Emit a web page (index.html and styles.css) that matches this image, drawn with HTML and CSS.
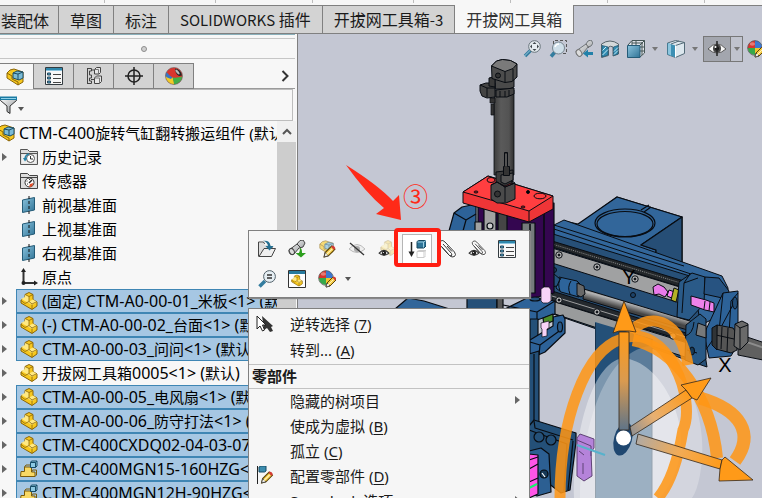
FILE: index.html
```html
<!DOCTYPE html>
<html lang="zh-CN">
<head>
<meta charset="utf-8">
<title>CTM-C400旋转气缸翻转搬运组件</title>
<link rel="stylesheet" href="styles.css">
</head>
<body>
<svg class="defs" aria-hidden="true">
  <defs>
    <linearGradient id="gBlue" x1="0" y1="0" x2="1" y2="1"><stop offset="0" stop-color="#8cc4de"/><stop offset="1" stop-color="#2f7396"/></linearGradient>
    <linearGradient id="gGrey" x1="0" y1="0" x2="1" y2="1"><stop offset="0" stop-color="#ffffff"/><stop offset="1" stop-color="#8b8f92"/></linearGradient>
    <symbol id="part" viewBox="0 0 18 18">
      <path d="M1 8l4-2V2.500l4-2 4 2v5l4 2.500v4l-5 3.500L1 11z" fill="#f7c81e" stroke="#8a6508"/>
      <path d="M5 2.500l4 2v5l4-2 4 2.500-5 3-7-4-4-2 4-2z" fill="#ffe982"/>
      <path d="M5 2.500l4 2 4-2M9 4.500v5l3 2.500 5-2.500M12 12.500V17M9 9.500L5 11.500 1 8.500" fill="none" stroke="#8a6508" stroke-width=".8"/>
    </symbol>
    <symbol id="assembly" viewBox="0 0 18 18">
      <path d="M1 5l3-3 4-1 3 1 6 2v10l-5 3L1 10z" fill="#f7c81e" stroke="#8a6508"/>
      <path d="M1 5l5 3v3l6 3v3" fill="none" stroke="#8a6508"/>
      <path d="M7 5l4-2 6 1v6l-4 2-6-2z" fill="#7bbbd6" stroke="#1c4f68"/>
      <path d="M7 5l5 1v6M12 6l5-2" fill="none" stroke="#1c4f68"/>
    </symbol>
    <symbol id="subpart" viewBox="0 0 18 18">
      <path d="M1 11.500h3.500V7h7v5H15v4.500H.5z" fill="#f9d964" stroke="#7b5b08"/>
      <path d="M4.500 7l1.500-2h6M11.500 12l1-2h4v5l-1.500 1.500" fill="none" stroke="#7b5b08"/>
      <path d="M10.500 2.500l1-1.500H17v5l-1.500 1.500h-5z" fill="#8cc9e2" stroke="#174d67"/>
      <path d="M10.500 2.500h5v5M15.500 2.500L17 1" fill="none" stroke="#174d67"/>
    </symbol>
    <symbol id="list" viewBox="0 0 18 18">
      <path d="M.5.5h17v17H.5z" fill="#f8f8f8" stroke="#333b40"/>
      <path d="M1 1h16v3H1z" fill="#2f87ab"/><path d="M1 3h16v1H1z" fill="#8cc4de"/>
      <path d="M2.500 6h3v2h-3zM2.500 10h3v2h-3zM2.500 14h3v2h-3z" fill="#4c9fc4" stroke="#27475a"/>
      <path d="M8 7.500h8M8 11.500h8M8 15.500h8" stroke="#444"/>
    </symbol>
    <symbol id="config" viewBox="0 0 18 18">
      <path d="M2.500 1v15.500M2 1.500h4.500v2.500H4.500v4h2v3h-2v3h2v2.500H2" fill="none" stroke="#444"/>
      <path d="M6 3h4M6 12.500h4" stroke="#444"/>
      <path d="M9.500 2.500l2-2h4v5l-1.500 1.500H9.500zM9.500 11l2-2h5v5.500L14.500 16.500h-5z" fill="#e6e6e6" stroke="#444"/>
      <path d="M9.500 2.500h4V7M9.500 11h5v5" fill="none" stroke="#777"/>
    </symbol>
    <symbol id="target" viewBox="0 0 18 18">
      <circle cx="9" cy="9" r="6" fill="none" stroke="#222" stroke-width="1.500"/>
      <path d="M9 0v18M0 9h18" stroke="#222" stroke-width="1.500"/>
    </symbol>
    <symbol id="ball" viewBox="0 0 18 18">
      <path d="M9 9L1 10A8 8 0 0 1 9 .5z" fill="#d8342c"/><path d="M9 9V.5A8 8 0 0 1 17 9z" fill="#3b78cf"/>
      <path d="M9 9h8A8 8 0 0 1 9 17z" fill="#eec52d"/><path d="M9 9v8A8 8 0 0 1 1 9z" fill="#36a949"/>
      <circle cx="9" cy="9" r="8.300" fill="none" stroke="#555" stroke-width=".8"/>
      <ellipse cx="6" cy="4.500" rx="3" ry="2" fill="#fff" opacity=".35"/>
    </symbol>
    <symbol id="ballStudio" viewBox="0 0 18 18">
      <circle cx="9" cy="9" r="8.500" fill="#d9352e"/>
      <path d="M.5 9q4 1 7 1.500L9 17.500A8.500 8.500 0 0 1 .5 9z" fill="#f1cb27"/>
      <path d="M7.500 10.500q5 .5 9.800-1A8.500 8.500 0 0 1 9 17.500z" fill="#42ae47"/>
      <path d="M1.500 5q3 4 6 5.500L6 12q-4-1-5.500-3 0-2 1-4z" fill="#3676c5"/>
      <path d="M7.500 10.500L4.500 15l4.500 2.500z" fill="#f1cb27"/>
      <path d="M10 1.500q6 1 7 7l-3 .5q-4-2-4-7.500z" fill="#252525"/>
      <ellipse cx="12.500" cy="5" rx="1.200" ry="3" fill="#bbb" transform="rotate(-40 12.500 5)"/>
      <circle cx="9" cy="9" r="8.500" fill="none" stroke="#666" stroke-width=".6"/>
    </symbol>
    <symbol id="pencil" viewBox="0 0 12 12">
      <path d="M1 11l1-4 6-6 3 3-6 6z" fill="#f4cb45" stroke="#5a4208"/><path d="M1 11l1-4 3 3z" fill="#eee" stroke="#333" stroke-width=".7"/>
      <path d="M7.500 1.500l1-1q2 0 3 2.500l-1.500 1.500z" fill="#d33b35"/><path d="M3 9l5.500-5.500" stroke="#fff3ba"/>
    </symbol>
    <symbol id="folderHistory" viewBox="0 0 18 18">
      <path d="M.5 16.500V1.500h7l2 2h8v13z" fill="#ddd" stroke="#555"/><path d="M1 5.500h16" stroke="#555"/>
      <path d="M2 6.500h14v9H2z" fill="#eee"/>
      <circle cx="10.500" cy="10.500" r="4" fill="#fff" stroke="#555"/><path d="M10.500 8v3h2.500" fill="none" stroke="#333"/>
      <path d="M3 10h4.500L5 13.500z" fill="#2783a8"/><path d="M5 10q1-3.500 4-4" fill="none" stroke="#2783a8" stroke-width="1.500"/>
    </symbol>
    <symbol id="folderSensor" viewBox="0 0 18 18">
      <path d="M.5 16.500V1.500h7l2 2h8v13z" fill="#ddd" stroke="#444"/><path d="M1 5.500h16" stroke="#444"/>
      <circle cx="9.500" cy="10.500" r="4.500" fill="#fff" stroke="#333"/><path d="M9 11l3-3" stroke="#222" stroke-width="1.500"/>
      <path d="M10 12l3.500-1-1.500 3.500-3 .5z" fill="#e34c27"/><path d="M6.500 9h1M9.500 7v1M7 12h1" stroke="#333"/>
    </symbol>
    <symbol id="plane" viewBox="0 0 18 18">
      <path d="M2.500 4l12-2.500v12.500l-12 2.500z" fill="url(#gBlue)" stroke="#245b77"/>
      <path d="M9 0v3M9 5v3M9 10v3M9 15v3" stroke="#111"/>
    </symbol>
    <symbol id="origin" viewBox="0 0 18 18">
      <path d="M3.500 3v12H15" fill="none" stroke="#333" stroke-width="2"/><path d="M3.500 0l2.500 4H1zM18 15l-4-2.500v5z" fill="#222"/><circle cx="3.500" cy="15" r="2" fill="#222"/>
    </symbol>
    <symbol id="funnel" viewBox="0 0 18 18">
      <path d="M.5 2h16v2.500L10 10v7.500l-3-2V10L.5 4.500z" fill="url(#gGrey)" stroke="#333"/>
      <path d="M0 .5h17V4H0z" fill="#197aa3"/><path d="M1 2h15v1H1z" fill="#8fd0e8"/>
    </symbol>
    <symbol id="zoomFit" viewBox="0 0 18 18">
      <path d="M8 10l-6 6" stroke="#347d9f" stroke-width="3.500"/><path d="M7.500 10L1 16.500" stroke="#9ccbe0"/>
      <circle cx="11.500" cy="6.500" r="5.800" fill="#e6edf1" stroke="#68747b"/>
      <path d="M11.500 2l2 2h-4zM11.500 11l2-2h-4zM7 6.500l2-2v4zM16 6.500l-2-2v4z" fill="#3f474c"/>
    </symbol>
    <symbol id="zoomArea" viewBox="0 0 18 18">
      <path d="M4.500 4V.5h13v13H14" fill="none" stroke="#555" stroke-dasharray="3 2"/>
      <path d="M6 12l-4 4.500" stroke="#347d9f" stroke-width="3.500"/><circle cx="9.500" cy="8" r="6" fill="#cfdfe9" stroke="#778690"/>
      <path d="M6 7q1-3 4-3" fill="none" stroke="#fff" stroke-width="1.500"/>
    </symbol>
    <symbol id="prevView" viewBox="0 0 18 18">
      <path d="M1 11l10-7 2-3 3-1 2 3-2 3-3 1-7 9q-5 1-5-5z" fill="url(#gGrey)" stroke="#70767a"/>
      <ellipse cx="4" cy="13" rx="2.500" ry="3.500" fill="#ddd" stroke="#777" transform="rotate(-30 4 13)"/><path d="M11 4l3 4" stroke="#666"/>
      <path d="M8 13.500l5-4v2.500h5v3h-5v2.500z" fill="#2381a9"/>
    </symbol>
    <symbol id="section" viewBox="0 0 18 18">
      <path d="M.5 4Q9-2 17.500 4V14l-5.500 2V7Q9.500 5.500 7.500 7v8.500l-7 2z" fill="#d3d8da" stroke="#58646b"/>
      <path d="M1 5.500l6 1.500v8l-6 2zM12.500 7L17 5.500V14l-4.500 1.500z" fill="#318bb0" stroke="#245b77" stroke-width=".8"/>
      <path d="M1.500 10.500L5 7M1.500 15L7 9.500M13 11.500l4-4M13 14.500l4-4" stroke="#caecf8"/>
    </symbol>
    <symbol id="orient" viewBox="0 0 18 18">
      <path d="M1 5l4-4.500h12.500V13L13 17" fill="#e0e4ea" stroke="#455"/>
      <path d="M5 1v4M9 1v4M13 5l4.500-4.500M5 3h11M15 2v13M13 7h4M13 11h4" fill="none" stroke="#455"/>
      <path d="M.5 5.500h12.500v12H.5z" fill="url(#gBlue)" stroke="#245b77"/>
    </symbol>
    <symbol id="display" viewBox="0 0 18 18">
      <path d="M.5 3l8-2.500 9 2v11l-9 4-8-3z" fill="#dce7ee" stroke="#536a77"/>
      <path d="M.5 3l8 2.500v12l-8-3z" fill="#3d90b4"/><path d="M4 4l8-3M8.500 5.500l9-3" stroke="#536a77"/><path d="M1 3.500L4 4.500v11L1 14z" fill="#8cc6df"/><path d="M8.500 5.500v12" stroke="#fff"/>
    </symbol>
    <symbol id="eye" viewBox="0 0 18 18">
      <path d="M0 9q9-10 18 0-9 8-18 0z" fill="#f6f6f6" stroke="#555"/><circle cx="9" cy="8.500" r="4" fill="#444"/><circle cx="9" cy="8.500" r="2" fill="#111"/><path d="M9 1v15" stroke="#222" stroke-width="1.500"/><circle cx="7.500" cy="7" r="1" fill="#fff"/>
    </symbol>
    <symbol id="openFile" viewBox="0 0 18 18">
      <path d="M.5 16.500V2h5l1 2M14 6.500v3" fill="none" stroke="#444"/><path d="M1 16.500V3h4l2 2h6v5L9 16z" fill="#ddd"/><path d="M1 16.500L6 8.500h11.500l-4 8z" fill="#efefef" stroke="#444"/>
      <path d="M5 .8q7-1 7.500 5.200h3L11.500 10.500 7.500 6H10Q9.500 2 5 .8z" fill="#256f91"/>
    </symbol>
    <symbol id="spyglass" viewBox="0 0 18 18">
      <path d="M1 10l8-6 3-3.500 3-.5 2 3-2 4-4 1-5 6Q1 16 1 10z" fill="url(#gGrey)" stroke="#444"/><ellipse cx="3.800" cy="11.500" rx="2.300" ry="3.200" fill="#ddd" stroke="#444" transform="rotate(-30 3.800 11.500)"/><path d="M9 4l4 4" stroke="#444"/>
      <path d="M12 8q2 0 2 5h4l-5 4.500L7.500 13H11q1-2 1-5z" fill="#2c9e1d"/>
    </symbol>
    <symbol id="hide" viewBox="0 0 18 18">
      <path d="M1 9q8-9 16 0-8 7-16 0z" fill="#eee" stroke="#bbb"/><circle cx="9" cy="9" r="3" fill="#aaa"/><path d="M2 3l14 12" stroke="#333" stroke-width="1.300"/>
    </symbol>
    <symbol id="eyeDark" viewBox="0 0 18 18">
      <path d="M1 10q8-9 16 0-8 7-16 0z" fill="#fff" stroke="#333" stroke-width="1.800"/><circle cx="9" cy="10" r="3.800" fill="#222"/><circle cx="8" cy="9" r="1" fill="#fff"/>
    </symbol>
    <symbol id="suppress" viewBox="0 0 18 18">
      <path d="M3.500 2v12" stroke="#222" stroke-width="1.500"/><path d="M.5 11.500h6L3.500 17z" fill="#222"/>
      <path d="M9 1.500l2-1h7v5.500L16 8H9z" fill="#2e7598" stroke="#17475f"/><path d="M9.500 2h6v5.500M15.500 2L18 .5" fill="none" stroke="#9ed0e3"/>
      <path d="M9 11.500l2-1h7v5l-2 2H9zM9 11.500h7v6M16 11.500l2-1" fill="#fff" stroke="#ccc"/>
    </symbol>
    <symbol id="clip" viewBox="0 0 18 18">
      <path d="M5 4l8.500 9.500q1 2-.5 2.500-1.500 0-3-2L2 5Q.5 2.500 2.500 1 5-.5 7 2l9.500 10q2 3 0 4.500-2.500 1.500-5-1M8 6l5 6" fill="none" stroke="#fff" stroke-width="2.500"/>
      <path d="M5 4l8.500 9.500q1 2-.5 2.500-1.500 0-3-2L2 5Q.5 2.500 2.500 1 5-.5 7 2l9.500 10q2 3 0 4.500-2.500 1.500-5-1L4 7M9 6l5 5.500" fill="none" stroke="#333"/>
    </symbol>
    <symbol id="zoomSel" viewBox="0 0 18 18">
      <path d="M7 11l-5.500 5.500" stroke="#347d9f" stroke-width="3.500"/><circle cx="11.500" cy="6.500" r="5.900" fill="#e5eef3" stroke="#52616a"/><path d="M9 5h5M9 8h5" stroke="#333" stroke-width="1.500"/>
    </symbol>
    <symbol id="partWindow" viewBox="0 0 18 18">
      <path d="M.5.5h17v17H.5z" fill="#fff" stroke="#333"/><path d="M1 1h16v3H1z" fill="#287b9e"/><use href="#part" x="3" y="4.500" width="12" height="12"/>
    </symbol>
    <symbol id="cursor" viewBox="0 0 18 18">
      <path d="M6 1l11 10-2 1 2 4-3 1-3-4-3 2z" fill="#333"/><path d="M1 1v13l3-3 2.500 5 2-1-2-5H10z" fill="#fff" stroke="#222"/>
    </symbol>
    <symbol id="configPart" viewBox="0 0 18 18">
      <path d="M1.500 0v18" stroke="#222"/><path d="M3 1l2-1h5v5L8.500 6H3z" fill="#3c8cae" stroke="#174d67"/><use href="#pencil" x="4" y="5" width="14" height="13"/>
    </symbol>
    <symbol id="editAsm" viewBox="0 0 18 18">
      <use href="#assembly" x="0" y="0" width="17" height="15" opacity=".6"/><use href="#pencil" x="5" y="5" width="13" height="13"/>
    </symbol>
    <symbol id="showPart" viewBox="0 0 18 18">
      <use href="#part" x="2" y="0" width="16" height="16" opacity=".3"/><use href="#eyeDark" x="0" y="7" width="12" height="11"/>
    </symbol>
    <symbol id="clipEye" viewBox="0 0 18 18"><use href="#clip" x="3" y="0" width="15" height="16"/><use href="#eyeDark" x="0" y="7" width="12" height="11"/></symbol>
    <symbol id="ballPencil" viewBox="0 0 18 18"><use href="#ball" x="0" y="0" width="16" height="16"/><use href="#pencil" x="7" y="6" width="12" height="12"/></symbol>
  </defs>
</svg>

<div class="app">
  <div class="ruler"><i></i><i></i><i></i><i></i><i></i><i></i><i></i></div>
  <nav class="tabs">
    <button class="tab first">装配体</button><button class="tab">草图</button><button class="tab">标注</button><button class="tab"><span>SOLIDWORKS</span> 插件</button><button class="tab">开拔网工具箱<span>-3</span></button><button class="tab active">开拔网工具箱</button>
  </nav>

  <aside class="panel">
    <div class="grip"><span></span></div>
    <div class="ptabs">
      <button class="ptab active" aria-label="设计树"><svg><use href="#assembly"/></svg></button>
      <button class="ptab" aria-label="属性"><svg><use href="#list"/></svg></button>
      <button class="ptab" aria-label="配置"><svg><use href="#config"/></svg></button>
      <button class="ptab" aria-label="尺寸"><svg><use href="#target"/></svg></button>
      <button class="ptab" aria-label="外观"><svg><use href="#ballStudio"/></svg></button>
      <button class="more" aria-label="更多"><svg viewBox="0 0 8 12"><path d="M1.500 1l5 5-5 5" fill="none" stroke="#333" stroke-width="2"/></svg></button>
    </div>
    <div class="filter">
      <button aria-label="过滤器"><svg><use href="#funnel"/></svg><svg class="caret" viewBox="0 0 6 4"><path d="M0 0h6L3 4z"/></svg></button>
      <input type="text" aria-label="过滤">
    </div>
    <div class="treebox">
      <ul class="tree">
        <li class="root"><svg><use href="#assembly"/></svg><p><b>CTM-C400</b>旋转气缸翻转搬运组件 (默认)</p></li>
        <li class="node open"><div><svg><use href="#folderHistory"/></svg><p>历史记录</p></div></li>
        <li class="node"><div><svg><use href="#folderSensor"/></svg><p>传感器</p></div></li>
        <li class="node"><div><svg><use href="#plane"/></svg><p>前视基准面</p></div></li>
        <li class="node"><div><svg><use href="#plane"/></svg><p>上视基准面</p></div></li>
        <li class="node"><div><svg><use href="#plane"/></svg><p>右视基准面</p></div></li>
        <li class="node"><div><svg><use href="#origin"/></svg><p>原点</p></div></li>
        <li class="node open sel"><div><svg><use href="#part"/></svg><p><b>(</b>固定<b>) CTM-A0-00-01_</b>米板<b>&lt;1&gt; (</b>默认)</p></div></li>
        <li class="node open sel"><div><svg><use href="#part"/></svg><p><b>(-) CTM-A0-00-02_</b>台面<b>&lt;1&gt; (</b>默认)</p></div></li>
        <li class="node open sel"><div><svg><use href="#part"/></svg><p><b>CTM-A0-00-03_</b>问问<b>&lt;1&gt; (</b>默认)</p></div></li>
        <li class="node open"><div><svg><use href="#part"/></svg><p>开拔网工具箱<b>0005&lt;1&gt; (</b>默认<b>)</b></p></div></li>
        <li class="node open sel"><div><svg><use href="#part"/></svg><p><b>CTM-A0-00-05_</b>电风扇<b>&lt;1&gt; (</b>默认)</p></div></li>
        <li class="node open sel"><div><svg><use href="#part"/></svg><p><b>CTM-A0-00-06_</b>防守打法<b>&lt;1&gt; (</b>默认)</p></div></li>
        <li class="node open sel"><div><svg><use href="#part"/></svg><p><b>CTM-C400CXDQ02-04-03-07</b></p></div></li>
        <li class="node open sel"><div><svg><use href="#subpart"/></svg><p><b>CTM-C400MGN15-160HZG&lt;1&gt;</b></p></div></li>
        <li class="node open sel"><div><svg><use href="#subpart"/></svg><p><b>CTM-C400MGN12H-90HZG&lt;1&gt;</b></p></div></li>
      </ul>
      <div class="scroll"><button aria-label="向上滚动"><svg viewBox="0 0 10 7"><path d="M1 6l4-4 4 4" fill="none" stroke="#555" stroke-width="2"/></svg></button></div>
    </div>
  </aside>

  <main class="view">
    <svg class="model" viewBox="298 34 464 464" preserveAspectRatio="xMinYMin meet" role="img" aria-label="装配体模型">
      <defs>
        <linearGradient id="cyl" x1="0" x2="1" y1="0" y2="0"><stop offset="0" stop-color="#3d3d3d"/><stop offset=".35" stop-color="#5a5a5a"/><stop offset=".75" stop-color="#535353"/><stop offset="1" stop-color="#303030"/></linearGradient>
        <linearGradient id="rod" gradientUnits="userSpaceOnUse" x1="645" y1="303" x2="642" y2="314"><stop offset="0" stop-color="#555"/><stop offset=".4" stop-color="#b5b5b5"/><stop offset="1" stop-color="#444"/></linearGradient>
        <linearGradient id="fadeUp" gradientUnits="userSpaceOnUse" x1="624" y1="332" x2="624" y2="430"><stop offset="0" stop-color="#ff9a18"/><stop offset=".5" stop-color="#d99a50"/><stop offset="1" stop-color="#5f7488"/></linearGradient>
        <linearGradient id="fadeNE" gradientUnits="userSpaceOnUse" x1="690" y1="392" x2="630" y2="434"><stop offset="0" stop-color="#ff9a18"/><stop offset=".6" stop-color="#e8b072"/><stop offset="1" stop-color="#8d8f93"/></linearGradient>
        <linearGradient id="fadeSE" gradientUnits="userSpaceOnUse" x1="722" y1="468" x2="636" y2="440"><stop offset="0" stop-color="#ff9a18"/><stop offset=".5" stop-color="#f2ab55"/><stop offset="1" stop-color="#b0aaa4"/></linearGradient>
      </defs>

      <!-- motor housing behind the beam -->
      <g stroke="#080c12" stroke-width="1.200" stroke-linejoin="round">
        <path d="M617 197l65 20v50l-80-20-24-22z" fill="#275078"/>
        <path d="M617 197l65 20-41 28 15 5v8l-92-37 14 3z" fill="#32669a"/>
        <path d="M682 217v46l-26-6v-7l-15-5z" fill="#264e76"/>
        <path d="M641 210l8-5M644 212l7-5" fill="none"/>
        <ellipse cx="625" cy="223" rx="30" ry="14" fill="#32669a"/><ellipse cx="625" cy="224" rx="28" ry="12.500" fill="none"/>
      </g>
      <!-- horizontal beam -->
      <g stroke="#080c12" stroke-width="1" stroke-linejoin="round">
        <path d="M554 225l10-5 158 56 6 12-1 24-40 20-133-30z" fill="#32669a"/>
        <path d="M554 229l128 42 36 12M554 225l130 41" fill="none"/>
        <path d="M553 234l140 43 14 90-154-53z" fill="#275078"/>
        <path d="M552 241l132 40v7l-132-41z" fill="#222629"/><path d="M552 244l132 40" stroke="#a3a3a3" stroke-width=".8" stroke-dasharray="1 1"/>
        <path d="M552 248l131 40-3 15-128-40z" fill="#a0a1a2"/>
        <path d="M552 291l150 47v8l-150-45z" fill="#24292e"/><path d="M552 296l150 46" stroke="#aaa" stroke-width=".9"/>
        <path d="M552 301l142 44-3 14-139-46z" fill="#999b9c"/>
        <g fill="#b9b9b9"><circle cx="559" cy="255" r="3.200"/><circle cx="597" cy="267" r="3.200"/><circle cx="635" cy="279" r="3.200"/><circle cx="559" cy="300" r="3.200"/><circle cx="597" cy="312" r="3.200"/><circle cx="673" cy="336" r="3.200"/></g>
        <g fill="#111"><circle cx="559" cy="255" r="1"/><circle cx="597" cy="267" r="1"/><circle cx="635" cy="279" r="1"/><circle cx="559" cy="300" r="1"/><circle cx="597" cy="312" r="1"/></g>
        <circle cx="633" cy="295" r="2.500" fill="#1d4268"/><circle cx="554" cy="270" r="2.500" fill="#1d4268"/>
        <path d="M584 289l119 36-2 9-118-35z" fill="url(#rod)"/>
        <path d="M559 277l18 4 4 4-2 12-18-5-5-4z" fill="#2d649b"/><path d="M561 278q-4 5-1 13M571 281q-4 6-1 13" fill="none"/>
        <path d="M548 278l6-4 6 5-3 7-6 1z" fill="#24517d"/><path d="M577 283l7 3 1 8-4 3-4-2z" fill="#686868"/>
      </g>
      <!-- sensors and end plates -->
      <g stroke="#080c12" stroke-width="1">
        <path d="M653 287l5-3 6 3 4 5-3 5-6-3-5 1z" fill="#e97bea"/><path d="M669 290l6 2-1 7-7-3z" fill="#ff84fb"/><path d="M674 288l5 2-3 12-5-2z" fill="#b4b126"/>
        <path d="M678 295l1-13 13-9 13 4-1 27-15 16-12-3z" fill="#2a5a88"/><path d="M690 274l-6 9-2 30M684 283l14-5" fill="none"/>
        <path d="M705 277l14 1 10 13-2 8-23-5z" fill="#275381"/>
        <path d="M704 334l19-41 15-2v53l-7 12-22 2z" fill="#2d6298"/><path d="M723 293l-4 38-14 20M738 293l-7 8-3 50M719 331l16-30" fill="none"/>
        <ellipse cx="735" cy="303" rx="2.500" ry="6" fill="#234d77"/>
        <path d="M686 325l14-11 6 5v40l-8 6-13-5z" fill="#295985"/><path d="M685 336q8-2 9-14M687 350l10 3" fill="none"/>
        <ellipse cx="692" cy="351" rx="2.500" ry="4" fill="#173957"/>
        <path d="M691 296l15 4 8 3v9l-9-2-14-5z" fill="#ee82eb"/><path d="M705 301l-1 8M710 302l-1 9" fill="none"/>
        <path d="M698 323l8 3v12l-10-3z" fill="#77797a"/>
        <path d="M738 334l30 10v17l-30-6z" fill="#606060"/><path d="M738 339l26 9" stroke="#8d8d8d" stroke-width="2"/>
        <path d="M717 325l16 3 4 6v16l-6 3-15-4z" fill="#555"/>
        <path d="M735 324l7-3 6 3v18l-8 8-6-4z" fill="#6a6a6a"/><path d="M716 335l18 4M722 327l-1 22M728 328l-1 24M735 324l5 4 8-3M740 328v21" fill="none"/>
        <path d="M712 328l5-3v25l-5-5z" fill="#303437"/>
      </g>

      <!-- vertical column -->
      <path d="M595 322l57 17v159h-57z" fill="#245078"/><path d="M595.500 323v175M652 339v159" stroke="#17324c"/>
      <!-- left bracket and carriage -->
      <g stroke="#080c12" stroke-width="1.200" stroke-linejoin="round">
        <path d="M449 231l5-18 8-6 14-3v27z" fill="#2d6298"/><path d="M463 231l3-11 10-6M454 213l12 7" fill="none"/>
        <path d="M478 203h76v90l-25 6-51-62z" fill="#340650"/>
        <path d="M475 222h7v14h-7zM484 209h12v25h-12z" fill="#a2a2a2"/><path d="M498 209h9v25h-9z" fill="#454545"/><path d="M522 223h13v70h-13z" fill="#757b7c"/><path d="M530 224v70M544 212v80" stroke-width="1.600"/><circle cx="490" cy="226" r="3" fill="#ccc"/>
        <path d="M395 309l13-11 16 3 32 10z" fill="#32669a"/>
        <path d="M467 298h30v12h-30z" fill="#265078"/><path d="M497 298h6v12h-6z" fill="#585858"/>
        <path d="M503 310l26-13 26 4v13l-18 6-10 1z" fill="#2d6298"/><path d="M503 305l34 7 18-11M537 312v8" fill="none"/><ellipse cx="535" cy="299" rx="5" ry="2" fill="#245078"/>
        <path d="M530 319h8v24l-8 4z" fill="#245078"/>
        <path d="M530 340l23-14v-9l10-2 2 4v14l-20 19-9 4-6-1z" fill="#2d6298"/><path d="M530 342l10 3 22-16M540 345l-1 10" fill="none"/><ellipse cx="560" cy="327" rx="2.500" ry="5" fill="#2b5a88"/>
        <path d="M543 318l10-4v7l-9 4z" fill="#4c8d27"/><path d="M541 289l3-2h5l2 3v11l-3 2h-5l-2-2zM541 323l8-2v7l-2 1v7l-5 1v-8l-1-1z" fill="#f8d3f7" stroke-width=".7"/>
        <path d="M529 354l10-3v76l-10 2z" fill="#245078"/><path d="M534 354v74" fill="none"/>
        <path d="M529 426l5-6 42 13v9l-6 48-9 3-13-10-19 2z" fill="#245078"/><path d="M534 421l1 7 38 12M529 430l38 14-3 47M573 441l-5 49" fill="none"/>
        <circle cx="539" cy="437" r="5" fill="#245078"/><circle cx="551" cy="440" r="5" fill="#245078"/>
        <path d="M529 451l12-3 8 6 2 38-14 4-8-3z" fill="#2c5f92"/><circle cx="544" cy="474" r="4" fill="#173957"/><path d="M542 473l3 4" stroke="#fff"/>
        <path d="M529 454l9 1v39l-9 4z" fill="#ff55e8"/><path d="M529 469l9-5M529 460l9-3M529 482l9-4" fill="none"/><path d="M529 488l8-4" stroke="#15f36c" stroke-width="2"/>
      </g>

      <!-- grey pneumatic cylinder on the red plate -->
      <g stroke="#080c12" stroke-width="1" stroke-linejoin="round">
        <path d="M463 192l25-16 65 20v13l-24 13-66-19z" fill="#ef3537"/>
        <path d="M463 192l25-16 65 20-24 15z" fill="#ff3e40"/><path d="M529 211v11" fill="none"/>
        <ellipse cx="540" cy="196" rx="6" ry="2.800" fill="none"/><ellipse cx="491" cy="180" rx="4" ry="2.500" fill="none"/><ellipse cx="476" cy="192" rx="2" ry="1" fill="#b22"/><ellipse cx="523" cy="207" rx="2" ry="1" fill="#b22"/><circle cx="528" cy="192" r="1.500"/>
        <path d="M494 90h20v85h-20z" fill="url(#cyl)" stroke-width=".8"/>
        <path d="M496 172l17-2v12l-8 4-9-4z" fill="#3c3c3c"/><path d="M501 175l12-2v7l-8 4-4-2z" fill="#555"/>
        <path d="M491 185l6-3 8 5 10-4v16l-9 4h-9l-6-4z" fill="#4a4a4a"/><path d="M505 187v15M491 185l6-3 8 5 10-4-4-2" fill="none"/><circle cx="497.500" cy="194" r="3" fill="#333"/>
        <path d="M504.500 152.500h3v14h2v9h-6v-9h1z" fill="#333"/><path d="M506 154v12" stroke="#777"/>
        <path d="M495 79h19v8l-5 2h-14z" fill="#4a4a4a"/>
        <path d="M496 90l18-2v6l-7 3h-11z" fill="#444"/><path d="M500 91v6M505 91v6M509 90v6" fill="none"/>
        <path d="M480 85l6-2h9v14l-8 1-5-2-2-5z" fill="#444"/><path d="M487 88h9M487 88v9M480 85l7 3" fill="none"/><path d="M489 78l4-1 2 2v8l-6-1z" fill="#3a3a3a"/>
        <path d="M490 98h5v5h-5zM491 104h3v11h-3z" fill="#333" stroke-width=".7"/>
        <path d="M491.500 66l5-5 6-1.500 8 1 6.500 3.500v13l-5 4.500-7 1-13-4z" fill="#4c4c4c"/><path d="M491.500 66l5-5 6-1.500 8 1 6.500 3.500-4 4.500-8 3z" fill="#7a7a7a"/><path d="M505 71.500v11M513 69v12" fill="none"/><circle cx="498" cy="75.500" r="2.500" fill="#333"/>
      </g>

      <!-- rotation triad -->
      <g fill="#fff">
        <path d="M574 498C573 440 590 363 623 358C662 362 684 418 681 445C679 475 666 490 660 498z" fill-opacity=".4"/>
        <path d="M580 498C581 440 600 352 650 346C690 360 710 430 700 475Q697 491 692 498z" fill-opacity=".25"/>
      </g>
      <g stroke="#5f4376">
        <path d="M577 438l3-4 14 5v9l-3 4 1 24-8 5-7-5z" fill="#b583da"/><path d="M577 440l14 6v10M579 451l5 4M583 463v11" fill="none"/>
      </g>
      <g fill="none" stroke="#ff9615" stroke-opacity=".86" stroke-width="11">
        <path d="M560 498C560 420 585 350 622 339C667 321 697 400 683 430Q675 478 658 498"/>
        <path d="M631 331C653 310 681 322 688 365"/>
        <path d="M633 340C673 348 711 395 717 458" stroke-width="12"/>
        <path d="M700 398C741 410 755 434 735 461" stroke-width="13"/>
      </g>
      <ellipse cx="623" cy="439" rx="9" ry="17" fill="#1f4770" transform="rotate(15 623 439)"/>
      <path d="M577 445l28 10" stroke="#57b2cc" stroke-width="2"/>
      <g stroke="#33271a" stroke-width=".8" stroke-linejoin="round">
        <path d="M619 332h10v98h-10z" fill="url(#fadeUp)"/><path d="M624 301l12 31-7-1h-10l-6 2z" fill="#ff9a18"/>
        <path d="M630 427l56-37 6 8-60 38z" fill="url(#fadeNE)"/><path d="M711 378l-14 22-5-2-6-8-5-5z" fill="#ff9a18"/>
        <path d="M638 434l84 26-2 9-84-25z" fill="url(#fadeSE)"/><path d="M753 480l-34 1 1-12 2-9 3-3z" fill="#ff9a18"/>
      </g>
      <circle cx="623.500" cy="438" r="7.500" fill="#fff"/>
      <text x="629" y="284" class="axis">Y</text><text x="725" y="372" class="axis">X</text>
    </svg>

    <div class="viewbar">
      <button aria-label="整屏显示"><svg><use href="#zoomFit"/></svg></button>
      <button aria-label="局部放大"><svg><use href="#zoomArea"/></svg></button>
      <button aria-label="上一视图"><svg><use href="#prevView"/></svg></button>
      <button aria-label="剖面视图"><svg><use href="#section"/></svg></button>
      <button class="drop" aria-label="视图定向"><svg><use href="#orient"/></svg><svg class="caret" viewBox="0 0 6 4"><path d="M0 0h6L3 4z"/></svg></button>
      <button class="drop" aria-label="显示样式"><svg><use href="#display"/></svg><svg class="caret" viewBox="0 0 6 4"><path d="M0 0h6L3 4z"/></svg></button>
      <button class="drop pressed" aria-label="隐藏项目"><span><svg><use href="#eye"/></svg></span><svg class="caret" viewBox="0 0 6 4"><path d="M0 0h6L3 4z"/></svg></button>
      <button aria-label="编辑外观"><svg><use href="#ballPencil"/></svg></button>
    </div>
  </main>

  <div class="quick">
    <button aria-label="打开零件"><svg><use href="#openFile"/></svg></button>
    <button aria-label="孤立显示"><svg><use href="#spyglass"/></svg></button>
    <button aria-label="编辑零件"><svg><use href="#editAsm"/></svg></button>
    <button aria-label="隐藏"><svg><use href="#hide"/></svg></button>
    <button aria-label="显示"><svg><use href="#showPart"/></svg></button>
    <button class="hot" aria-label="压缩"><svg><use href="#suppress"/></svg></button>
    <button aria-label="配合"><svg><use href="#clip"/></svg></button>
    <button aria-label="查看配合"><svg><use href="#clipEye"/></svg></button>
    <button aria-label="零部件属性"><svg><use href="#list"/></svg></button>
    <button aria-label="放大所选"><svg><use href="#zoomSel"/></svg></button>
    <button aria-label="预览窗口"><svg><use href="#partWindow"/></svg></button>
    <button aria-label="外观"><svg><use href="#ballPencil"/></svg></button>
    <button class="tiny" aria-label="更多外观"><svg class="caret" viewBox="0 0 6 4"><path d="M0 0h6L3 4z"/></svg></button>
  </div>

  <div class="menu">
    <button class="item tall"><svg><use href="#cursor"/></svg><span>逆转选择 (<u>7</u>)</span></button>
    <button class="item tall"><span>转到... (<u>A</u>)</span></button>
    <h2>零部件</h2>
    <button class="item sub"><span>隐藏的树项目</span></button>
    <button class="item"><span>使成为虚拟 (<u>B</u>)</span></button>
    <button class="item"><span>孤立 (<u>C</u>)</span></button>
    <button class="item"><svg><use href="#configPart"/></svg><span>配置零部件 (<u>D</u>)</span></button>
    <button class="item sub"><span>Speedpak 选项</span></button>
  </div>

  <div class="callout"></div>
  <svg class="pointer" viewBox="0 0 58 58" aria-hidden="true"><path d="M0 0Q32 20 47 36L53 30 55 55 30 49 38 43Q20 28 0 0z" fill="#ff2a18"/></svg>
  <span class="step">③</span>
</div>
</body>
</html>
```
FILE: styles.css
```css
* { box-sizing: border-box; }

body {
  margin: 0;
  font-family: "Noto Sans", "Noto Sans CJK SC", sans-serif;
  font-size: 15px;
  color: #1a1a1a;
  background: #c4c7d3;
}

button {
  margin: 0;
  padding: 0;
  border: 0;
  background: none;
  font: inherit;
  color: inherit;
}

svg { display: block; flex: none; width: 18px; height: 18px; }
svg.caret { width: 6px; height: 4px; fill: #555; }
svg.defs { position: absolute; width: 0; height: 0; }

.app {
  position: relative;
  display: grid;
  grid-template-columns: 298px 1fr;
  grid-template-rows: 5px 29px 1fr;
  height: 100vh;
  overflow: hidden;
}

.ruler {
  grid-column: 1 / -1;
  display: grid;
  grid-template-columns: 105px 111px 97px 101px 97px 97px 97px;
  background: #f7f7f7;
}
.ruler i { height: 3px; border-right: 1px solid #bdbdbd; }

.tabs {
  grid-column: 1 / -1;
  display: flex;
  border-top: 1px solid #808080;
}
.tab {
  padding: 0 11px;
  border-right: 1px solid #808080;
  border-bottom: 1px solid #808080;
  background: #d3d3d3;
  font-family: "Noto Sans CJK SC", sans-serif;
  font-size: 16px;
  line-height: 26px;
  white-space: nowrap;
}
.tab span { font-size: 15px; }
.tab.first { padding-left: 1px; padding-right: 9px; }
.tab.active { background: #f7f7f7; margin-top: -1px; color: #333; }

.panel {
  display: flex;
  flex-direction: column;
  min-height: 0;
  background: #f7f7f7;
  border-right: 1px solid #7f7f7f;
}
.grip {
  display: flex;
  align-items: center;
  justify-content: center;
  height: 25px;
  margin-right: 2px;
  padding-top: 4px;
  border-top: 1px solid #8ab0bb;
  border-bottom: 1px solid #c6c6c6;
  background: linear-gradient(#c6c6c6, #c6c6c6) 0 3px / 100% 1px no-repeat;
}
.grip span {
  width: 6px;
  height: 6px;
  margin-right: 8px;
  border: 1px solid #8d8d8d;
  border-radius: 50%;
  background: #d0d0d0;
}
.ptabs {
  display: flex;
  height: 26px;
  margin: 4px 2px 0 0;
  border-bottom: 1px solid #9b9b9b;
}
.ptab {
  display: grid;
  place-items: center;
  width: 40px;
  height: 26px;
  border: 1px solid #808080;
  border-left: 0;
  background: #d3d3d3;
}
.ptab.active { width: 34px; padding-right: 4px; background: #f7f7f7; border-bottom: 0; }
.more { margin: 0 6px 0 auto; }
.more svg { width: 8px; height: 12px; }

.filter {
  display: flex;
  height: 32px;
  margin-right: 4px;
  border: 1px solid #bdbdbd;
  border-left: 0;
}
.filter button { display: flex; align-items: center; }
.filter .caret { margin-top: 8px; }
.filter input { flex: 1; min-width: 0; border: 0; outline: 0; background: none; font: inherit; }

.treebox { display: flex; flex: 1; min-height: 0; }
.tree {
  flex: 1;
  min-width: 0;
  margin: 0;
  padding: 0;
  overflow: hidden;
  list-style: none;
  color: #000;
}
.tree li, .tree div {
  display: flex;
  align-items: center;
  height: 24px;
  white-space: nowrap;
  line-height: 22px;
}
.tree p { margin: 0; }
.tree b { font-weight: 400; font-size: 16px; }
.root svg { margin: 0 4px 0 -3px; }
.tree div { width: 100%; gap: 4px; padding-left: 3px; border: 1px solid transparent; overflow: hidden; }
.node::before {
  content: "";
  flex: none;
  margin-left: 2px;
  margin-right: 9px;
  border: 4px solid transparent;
  border-left: 5px solid transparent;
  border-right: 0;
}
.node.open::before { border-left-color: #666; }
.sel div { background: #a6c7e3; border-color: #3f86b4; border-right: 0; }

.scroll { width: 19px; margin-right: 1px; background: #cdcdcd; }
.scroll button { display: grid; place-items: center; width: 100%; height: 21px; background: #f0f0f0; }
.scroll svg { width: 10px; height: 7px; }

.view { position: relative; min-width: 0; min-height: 0; overflow: hidden; }
.model { width: 100%; height: auto; }
.axis { font: 20px "Liberation Sans", sans-serif; text-anchor: middle; }

.viewbar {
  position: absolute;
  top: 2px;
  right: -7px;
  display: flex;
  align-items: center;
  height: 26px;
}
.viewbar button { display: flex; align-items: center; justify-content: center; width: 26px; height: 26px; }
.viewbar .drop { width: 40px; gap: 7px; justify-content: flex-start; padding-left: 4px; }
.viewbar .caret { fill: #777; }
.viewbar .pressed {
  gap: 3px;
  padding: 0;
  border: 1px solid #777;
  background: linear-gradient(90deg, #a3a6ae 26px, #c0c3cd 26px);
}
.pressed span { padding: 3px 4px; border-right: 1px solid #777; }

.quick, .menu {
  position: absolute;
  left: 248px;
  width: 282px;
  background: #f6f6f6;
  border: 1px solid #808080;
}
.quick {
  top: 230px;
  display: grid;
  grid-template-columns: repeat(9, 30px);
  grid-auto-rows: 30px;
  padding: 3px;
  box-shadow: 1px 1px 1px #888;
}
.quick button { display: grid; place-items: center; }
.quick .hot { background: #fff; border: 1px solid #b5b5b5; }
.quick .tiny { justify-items: start; padding-left: 3px; }

.menu { top: 308px; padding-top: 3px; }
.item {
  display: flex;
  align-items: center;
  width: 100%;
  height: 25px;
  padding: 0 0 3px 7px;
  text-align: left;
}
.item.tall { height: 26px; }
.item svg { margin-right: -18px; }
.item span { padding-left: 34px; }
.item u { text-underline-offset: 2px; }
.item.sub::after {
  content: "";
  margin-left: auto;
  margin-right: 9px;
  border: 4px solid transparent;
  border-left: 5px solid #666;
  border-right: 0;
}
.menu h2 {
  margin: 0;
  padding-left: 3px;
  border-top: 1px solid #c2c2c2;
  border-bottom: 1px solid #c2c2c2;
  font-size: 15px;
  line-height: 23px;
}

.callout {
  position: absolute;
  left: 394px;
  top: 228px;
  width: 47px;
  height: 39px;
  border: 4px solid #ff1e12;
  border-radius: 4px;
}
.pointer { position: absolute; left: 346px; top: 165px; width: 58px; height: 58px; }
.step {
  position: absolute;
  left: 403px;
  top: 177px;
  font: 25px/36px "Noto Sans CJK SC", sans-serif;
  color: #ff2a18;
}
```
